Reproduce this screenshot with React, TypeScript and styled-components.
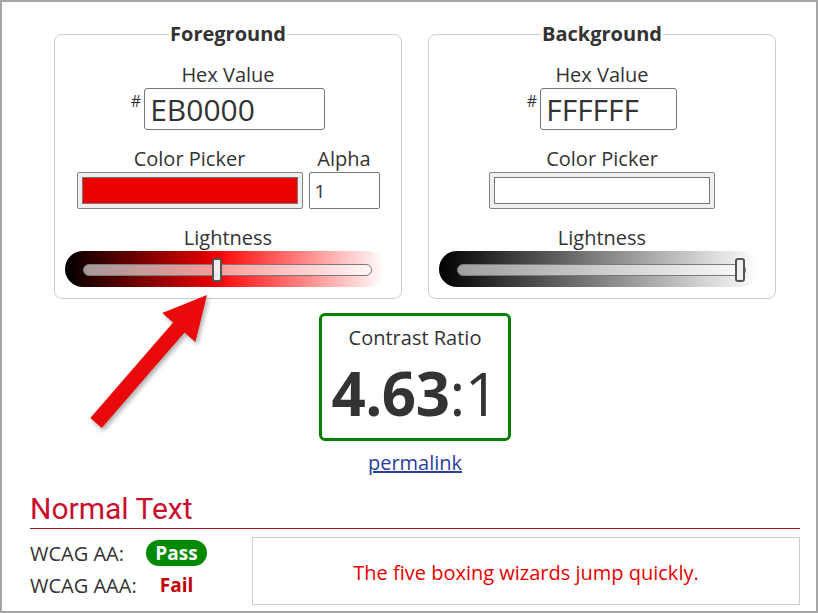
import React from "react";
import styled, { createGlobalStyle } from "styled-components";

const GlobalStyle = createGlobalStyle`
  body {
    margin: 0;
    font-family: "Open Sans", "Liberation Sans", sans-serif;
    color: #333;
    background: #fff;
  }
`;

interface ColorSide {
  title: string;
  hex: string;
  hexWidth: number;
  swatch: string;
  showAlpha: boolean;
  gradient: string;
  thumb: number;
}

const sides: ColorSide[] = [
  {
    title: "Foreground",
    hex: "EB0000",
    hexWidth: 181,
    swatch: "#eb0000",
    showAlpha: true,
    gradient: "linear-gradient(to right, #000 0%, #eb0000 47%, #ff1a1a 52%, #fff 100%)",
    thumb: 46.5,
  },
  {
    title: "Background",
    hex: "FFFFFF",
    hexWidth: 137,
    swatch: "#ffffff",
    showAlpha: false,
    gradient: "linear-gradient(to right, #000 0%, #808080 50%, #fff 100%)",
    thumb: 98.2,
  },
];

const ColorPanel: React.FC<{ side: ColorSide }> = ({ side }) => {
  return (
    <Panel>
      <Legend>{side.title}</Legend>
      <Label $top={17}>Hex Value</Label>
      <HexRow>
        <Hash>#</Hash>
        <HexInput $width={side.hexWidth} defaultValue={side.hex} readOnly />
      </HexRow>
      <PickerRow>
        <Field>
          <Label>Color Picker</Label>
          <Swatch>
            <SwatchFill $color={side.swatch} />
          </Swatch>
        </Field>
        {side.showAlpha && (
          <Field>
            <Label>Alpha</Label>
            <AlphaInput defaultValue="1" readOnly />
          </Field>
        )}
      </PickerRow>
      <Label $top={17}>Lightness</Label>
      <Slider $gradient={side.gradient}>
        <Track>
          <Thumb style={{ left: `${side.thumb}%` }} />
        </Track>
      </Slider>
    </Panel>
  );
};

const Arrow: React.FC = () => (
  <ArrowSvg width="818" height="613" viewBox="0 0 818 613">
    <polygon
      points="207,295 162.2,313.1 173.1,322.6 90.3,418.1 101.7,427.9 184.5,332.4 195.4,341.9"
      fill="#e9090b"
    />
  </ArrowSvg>
);

const App: React.FC = () => {
  return (
    <>
      <GlobalStyle />
      <Frame>
        <PanelRow>
          {sides.map((s) => (
            <ColorPanel key={s.title} side={s} />
          ))}
        </PanelRow>
        <RatioArea>
          <RatioBox>
            <RatioLabel>Contrast Ratio</RatioLabel>
            <RatioValue>
              <strong>4.63</strong>:1
            </RatioValue>
          </RatioBox>
          <Permalink href="#">permalink</Permalink>
        </RatioArea>
        <SectionTitle>Normal Text</SectionTitle>
        <ResultRow>
          <Checks>
            <CheckLabel>WCAG AA:</CheckLabel>
            <Badge $pass>Pass</Badge>
            <CheckLabel>WCAG AAA:</CheckLabel>
            <Badge $pass={false}>Fail</Badge>
          </Checks>
          <Sample>The five boxing wizards jump quickly.</Sample>
        </ResultRow>
        <Arrow />
      </Frame>
    </>
  );
};

export default App;

const Frame = styled.div`
  position: relative;
  width: 818px;
  height: 613px;
  box-sizing: border-box;
  border: 2px solid #a6a6a6;
  padding: 20px 16px 0 28px;
  overflow: hidden;
`;

const PanelRow = styled.div`
  display: flex;
  justify-content: center;
  gap: 26px;
`;

const Panel = styled.fieldset`
  width: 346px;
  box-sizing: border-box;
  margin: 0;
  padding: 0 10px 11px;
  border: 1px solid #ccc;
  border-radius: 8px;
  display: flex;
  flex-direction: column;
  align-items: center;
`;

const Legend = styled.legend`
  margin: 0 auto;
  padding: 0 1px;
  font-size: 20px;
  line-height: 24px;
  font-weight: 700;
  color: #333;
`;

const Label = styled.div<{ $top?: number }>`
  margin-top: ${(p) => p.$top ?? 0}px;
  margin-bottom: 1px;
  font-size: 20px;
  line-height: 24px;
  text-align: center;
  color: #333;
`;

const HexRow = styled.div`
  display: flex;
  align-items: flex-start;
  margin-bottom: 17px;
`;

const Hash = styled.span`
  font-size: 16px;
  line-height: 16px;
  margin: 5px 3px 0 0;
  color: #333;
`;

const HexInput = styled.input<{ $width: number }>`
  width: ${(p) => p.$width}px;
  height: 42px;
  box-sizing: border-box;
  border: 1px solid #767676;
  border-radius: 3px;
  padding: 0 5px;
  font-family: "Open Sans", sans-serif;
  font-size: 30px;
  color: #333;
  outline: none;
`;

const PickerRow = styled.div`
  display: flex;
  gap: 6px;
  align-items: flex-end;
`;

const Field = styled.div`
  display: flex;
  flex-direction: column;
  align-items: center;
`;

const Swatch = styled.div`
  width: 226px;
  height: 37px;
  box-sizing: border-box;
  border: 1px solid #858585;
  border-radius: 2px;
  background: #efefef;
  padding: 4px;
`;

const SwatchFill = styled.div<{ $color: string }>`
  height: 100%;
  box-sizing: border-box;
  border: 1px solid #767676;
  background: ${(p) => p.$color};
`;

const AlphaInput = styled.input`
  width: 71px;
  height: 37px;
  box-sizing: border-box;
  border: 1px solid #767676;
  border-radius: 2px;
  padding: 0 5px;
  font-family: "Open Sans", sans-serif;
  font-size: 19px;
  color: #333;
  outline: none;
`;

const Slider = styled.div<{ $gradient: string }>`
  width: 320px;
  height: 36px;
  margin-right: 6px;
  box-sizing: border-box;
  border-radius: 18px;
  background: ${(p) => p.$gradient};
  padding: 13px 13px 0 18px;
`;

const Track = styled.div`
  position: relative;
  height: 12px;
  box-sizing: border-box;
  border: 1px solid #7a7a7a;
  border-radius: 6px;
  background: rgba(255, 255, 255, 0.6);
`;

const Thumb = styled.div`
  position: absolute;
  top: -7px;
  width: 10px;
  height: 24px;
  margin-left: -5px;
  box-sizing: border-box;
  border: 2px solid #555;
  border-radius: 3px;
  background: #efefef;
`;

const RatioArea = styled.div`
  display: flex;
  flex-direction: column;
  align-items: center;
  margin-top: 14px;
`;

const RatioBox = styled.div`
  width: 192px;
  height: 128px;
  box-sizing: border-box;
  border: 3px solid #008000;
  border-radius: 6px;
  padding-top: 10px;
  text-align: center;
`;

const RatioLabel = styled.div`
  font-size: 20px;
  line-height: 24px;
  color: #333;
`;

const RatioValue = styled.div`
  margin-top: 7px;
  font-size: 60px;
  line-height: 72px;
  color: #333;
  letter-spacing: -0.5px;

  strong {
    font-weight: 700;
  }
`;

const Permalink = styled.a`
  margin-top: 10px;
  font-size: 20px;
  line-height: 24px;
  color: #2a3ea0;
  text-decoration: underline;
`;

const SectionTitle = styled.h2`
  margin: 17px 0 0;
  padding-bottom: 2px;
  border-bottom: 1.5px solid #a8121f;
  font-family: Roboto, "Open Sans", sans-serif;
  font-weight: 400;
  font-size: 30px;
  line-height: 34px;
  color: #c8102e;
`;

const ResultRow = styled.div`
  display: flex;
  align-items: flex-start;
  margin-top: 8px;
`;

const Checks = styled.div`
  width: 222px;
  display: grid;
  grid-template-columns: 115px 63px;
  grid-auto-rows: 32px;
  align-items: center;
  justify-items: center;
`;

const CheckLabel = styled.span`
  justify-self: start;
  font-size: 20px;
  color: #333;
`;

const Badge = styled.span<{ $pass: boolean }>`
  height: 26px;
  line-height: 26px;
  padding: 0 9px;
  border-radius: 13px;
  font-size: 19px;
  font-weight: 700;
  color: ${(p) => (p.$pass ? "#fff" : "#c40000")};
  background: ${(p) => (p.$pass ? "#008a00" : "transparent")};
`;

const Sample = styled.div`
  flex: 1;
  height: 68px;
  box-sizing: border-box;
  border: 1px solid #ccc;
  display: flex;
  align-items: center;
  justify-content: center;
  padding-top: 3px;
  font-size: 20px;
  color: #eb0000;
`;

const ArrowSvg = styled.svg`
  position: absolute;
  left: -2px;
  top: -2px;
  pointer-events: none;
  filter: drop-shadow(2px 3px 2px rgba(0, 0, 0, 0.3));
`;
